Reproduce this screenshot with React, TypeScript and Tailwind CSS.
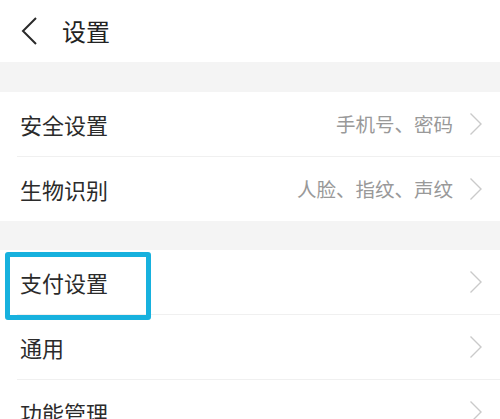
const font = { fontFamily: '"Noto Sans CJK SC", "Noto Sans", sans-serif' };

function Chevron() {
  return (
    <svg width="14" height="24" viewBox="0 0 14 24" className="text-[#cacaca]">
      <path d="M1.5 1.5 L12 12 L1.5 22.5" fill="none" stroke="currentColor" strokeWidth="1.4" />
    </svg>
  );
}

function Row({ label, value, highlight, last }: { label: string; value?: string; highlight?: boolean; last?: boolean }) {
  return (
    <div className={`relative bg-white ${highlight ? 'z-10' : ''}`}>
      <div className="flex items-center h-[64px] pl-[20px] pr-[17px]">
        <span className="text-[22px] text-[#2b2b2b] flex-1">{label}</span>
        {value && <span className="text-[19.5px] text-[#999999] mr-[16px]">{value}</span>}
        <Chevron />
      </div>
      {!last && <div className="ml-[17px] h-px bg-[#f0f0f0]" />}
      {highlight && (
        <div className="absolute left-[5px] top-[2px] w-[146px] h-[68px] border-[5px] border-[#17b1de] rounded-[3px]" />
      )}
    </div>
  );
}

export default function App() {
  return (
    <div className="w-[500px] h-[419px] overflow-hidden bg-white" style={font}>
      <div className="flex items-center h-[62px] pl-[14px]">
        <svg width="30" height="30" viewBox="0 0 30 30" className="text-[#2a2a2a]">
          <path d="M22 2 L9 15 L22 28" fill="none" stroke="currentColor" strokeWidth="2" />
        </svg>
        <span className="ml-[18px] text-[24px] text-[#222222]">设置</span>
      </div>
      <div className="h-[30px] bg-[#f4f4f4]" />
      <Row label="安全设置" value="手机号、密码" />
      <Row label="生物识别" value="人脸、指纹、声纹" last />
      <div className="h-[29px] bg-[#f4f4f4]" />
      <Row label="支付设置" highlight />
      <Row label="通用" />
      <Row label="功能管理" last />
    </div>
  );
}
